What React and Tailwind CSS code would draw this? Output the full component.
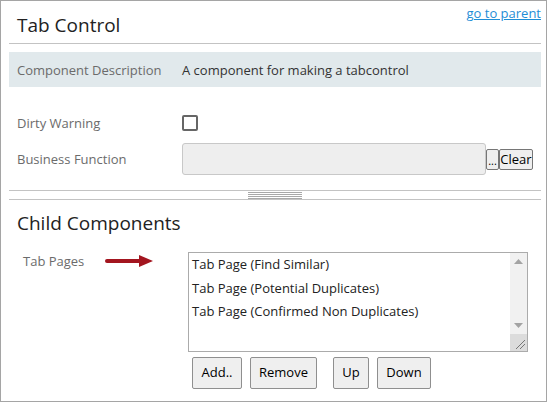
const LABEL = "w-[165px] shrink-0 text-[#6b6b6b]";

function Arrow() {
  return (
    <svg width="48" height="14" viewBox="0 0 48 14" className="shrink-0">
      <rect x="0" y="5" width="36" height="4" rx="2" fill="#a3151f" />
      <polygon points="34,1 48,7 34,13" fill="#a3151f" />
    </svg>
  );
}

function Scrollbar() {
  return (
    <div className="w-[17px] h-full bg-[#f1f1f1] flex flex-col items-center">
      <svg width="9" height="6" viewBox="0 0 9 6" className="mt-[6px]">
        <polygon points="0,5 4.5,0 9,5" fill="#a3a3a3" />
      </svg>
      <div className="flex-1" />
      <svg width="9" height="6" viewBox="0 0 9 6" className="mb-[22px]">
        <polygon points="0,0 9,0 4.5,5" fill="#a3a3a3" />
      </svg>
    </div>
  );
}

function Btn({ children, className }) {
  return (
    <button className={`h-[32px] bg-[#efefef] border border-[#8f8f8f] rounded-[2px] text-[13px] text-black ${className}`}>
      {children}
    </button>
  );
}

export default function App() {
  const pages = [
    "Tab Page (Find Similar)",
    "Tab Page (Potential Duplicates)",
    "Tab Page (Confirmed Non Duplicates)",
  ];

  return (
    <div className="w-[547px] h-[402px] border border-[#a5a5a5] pl-2 pr-[5px] bg-white font-['Open_Sans',sans-serif] text-[13px] text-[#333]">
      <div className="h-[43px] border-b border-[#c3c3c3] flex justify-between items-start">
        <h1 className="pl-2 pt-[11px] text-[19px] leading-[26px] text-[#222]">Tab Control</h1>
        <a href="#" className="pt-[3px] leading-[18px] text-[#1f8dd6] underline">
          go to parent
        </a>
      </div>

      <div className="mt-[8px] h-[35px] bg-[#e1e9ec] flex items-center pl-2 pt-[2px]">
        <span className={LABEL}>Component Description</span>
        <span className="text-[#333]">A component for making a tabcontrol</span>
      </div>

      <div className="mt-[28px] h-[16px] flex items-center pl-2">
        <span className={`${LABEL} pt-[2px]`}>Dirty Warning</span>
        <span className="w-4 h-4 border-2 border-[#666] rounded-[2px]" />
      </div>

      <div className="mt-[12px] h-[32px] flex items-center pl-2">
        <span className={`${LABEL} pt-[2px]`}>Business Function</span>
        <div className="w-[304px] h-[32px] bg-[#eeeeee] border border-[#c8c8c8] rounded-[3px]" />
        <button className="w-[13px] h-[21px] bg-[#efefef] border border-[#767676] rounded-[2px] text-[11px] leading-[16px] text-black flex items-end justify-center">
          ...
        </button>
        <button className="w-[34px] h-[21px] bg-[#efefef] border border-[#767676] rounded-[2px] text-[13px] leading-[18px] text-black">
          Clear
        </button>
      </div>

      <div className="mt-[15px] h-[10px] border-y border-[#c3c3c3] flex justify-center">
        <div className="w-[54px] pt-[1px] flex flex-col gap-[1px]">
          <div className="h-[1px] bg-[#a8a8a8]" />
          <div className="h-[1px] bg-[#a8a8a8]" />
          <div className="h-[1px] bg-[#a8a8a8]" />
          <div className="h-[1px] bg-[#a8a8a8]" />
        </div>
      </div>

      <h2 className="mt-[10px] pl-2 text-[19px] leading-[26px] text-[#222]">Child Components</h2>

      <div className="mt-[16px] flex">
        <div className="w-[179px] shrink-0 flex items-start pl-[14px]">
          <span className="w-[82px] leading-[18px] text-[#6b6b6b]">Tab Pages</span>
          <div className="mt-[2px]">
            <Arrow />
          </div>
        </div>
        <div>
          <div className="w-[340px] h-[100px] border border-[#ababab] flex">
            <div className="flex-1 pl-[3px]">
              {pages.map((p) => (
                <div key={p} className="leading-[23.5px] text-[#222]">
                  {p}
                </div>
              ))}
            </div>
            <div className="relative h-full">
              <Scrollbar />
              <div className="absolute right-0 bottom-0 w-[17px] h-[17px] bg-[#dcdcdc]">
                <svg width="17" height="17" viewBox="0 0 17 17">
                  <line x1="6" y1="15" x2="15" y2="6" stroke="#777" strokeWidth="1" />
                  <line x1="10" y1="15" x2="15" y2="10" stroke="#777" strokeWidth="1" />
                </svg>
              </div>
            </div>
          </div>
          <div className="mt-[5px] flex pl-[4px]">
            <Btn className="w-[50px]">Add..</Btn>
            <Btn className="w-[67px] ml-[8px]">Remove</Btn>
            <Btn className="w-[36px] ml-[16px]">Up</Btn>
            <Btn className="w-[54px] ml-[8px]">Down</Btn>
          </div>
        </div>
      </div>
    </div>
  );
}
